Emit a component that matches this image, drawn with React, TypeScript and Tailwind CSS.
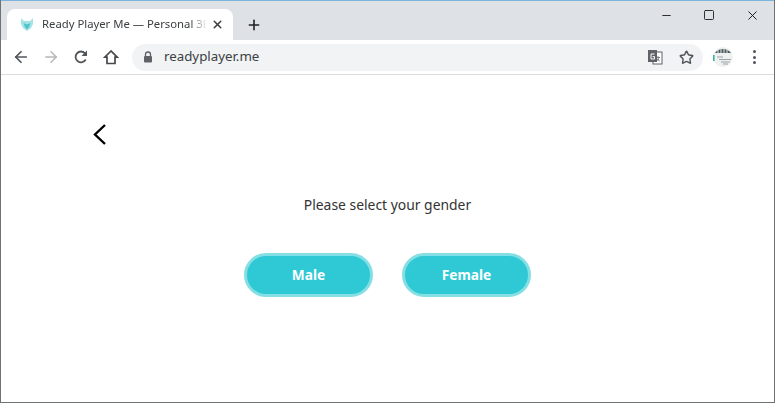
import React from 'react';
import { ArrowLeft, ArrowRight, Star, Plus, X, Minus, Square } from 'lucide-react';

function Favicon() {
  return (
    <svg width="14" height="15" viewBox="0 0 14 15" fill="none" className="shrink-0">
      <path d="M1 1l3 3h6l3-3v6l-2 4-4 3-4-3-2-4z" fill="#a5e4e6" />
      <path d="M3.500 6l3.500 1.500L10.500 6 9 10l-2 2.500L5 10z" fill="#4dc3cb" />
    </svg>
  );
}

function TranslateIcon() {
  return (
    <svg width="16" height="16" viewBox="0 0 16 16" className="shrink-0">
      <rect x="6" y="3" width="9" height="12" fill="#fff" stroke="#5f6368" />
      <rect x="1" y="1" width="9" height="12" fill="#5f6368" />
      <path d="M7.500 5H4v5h3.500V7.600H5.600" fill="none" stroke="#fff" strokeWidth="1" />
      <path d="M11 7v1M9 8.500h4M12 8.500c-.4 2-1.400 3-2.600 3.600M10 9.500c.6 1.200 1.500 2 2.800 2.500" fill="none" stroke="#5f6368" strokeWidth=".8" />
    </svg>
  );
}

function ReloadIcon() {
  return (
    <svg width="16" height="16" viewBox="0 0 16 16" fill="none" className="shrink-0">
      <path d="M12.700 10.500A5.400 5.400 0 1 1 12 4.300" stroke="#50555a" strokeWidth="1.800" />
      <path d="M14 1.500V7H8.500z" fill="#50555a" />
    </svg>
  );
}

function HomeIcon() {
  return (
    <svg width="16" height="16" viewBox="0 0 16 16" fill="none" className="shrink-0">
      <path d="M8 2L1.800 8.200H4v6.300h8V8.200h2.200z" stroke="#47494d" strokeWidth="1.700" strokeLinejoin="miter" />
    </svg>
  );
}

function LockIcon() {
  return (
    <svg width="10" height="12" viewBox="0 0 10 12" fill="none" className="shrink-0">
      <path d="M2.500 5V3.500a2.500 2.500 0 0 1 5 0V5" stroke="#5f6368" strokeWidth="1.300" />
      <rect x="1" y="5" width="8" height="6.500" rx="1" fill="#5f6368" />
    </svg>
  );
}

function Avatar() {
  return (
    <svg width="20" height="20" viewBox="0 0 20 20" className="shrink-0">
      <circle cx="10" cy="10" r="10" fill="#eef1f0" />
      <path d="M2 6a10 10 0 0 1 16 0z" fill="#4c5a60" />
      <path d="M5 2.500v3.500M8 1v5M11 1v5M14 2v4" stroke="#dfe5e5" strokeWidth="1" />
      <path d="M.8 8v6" stroke="#3db2a8" strokeWidth="1.600" />
      <path d="M4 10h6M6 12.500h12M8 15h9M10 17h5" stroke="#9aa3a6" strokeWidth="1" />
    </svg>
  );
}

function MoreDots() {
  return (
    <div className="flex flex-col gap-[2.500px]">
      <div className="h-[3px] w-[3px] rounded-full bg-[#50555a]" />
      <div className="h-[3px] w-[3px] rounded-full bg-[#50555a]" />
      <div className="h-[3px] w-[3px] rounded-full bg-[#50555a]" />
    </div>
  );
}

function ToolButton({ children }: { children: React.ReactNode }) {
  return <div className="flex h-5 w-5 items-center justify-center">{children}</div>;
}

export default function App() {
  return (
    <div className="flex h-[403px] w-[775px] flex-col overflow-hidden border-x border-b border-x-[#6d7275] border-b-[#6d7275] bg-white font-['Noto_Sans',sans-serif]">
      {/* title bar */}
      <div className="border-t border-t-[#7db4dc] bg-[#dee1e6]">
        <div className="flex h-[39px] items-end pl-[6px]">
          <div className="flex h-[31px] w-[226px] items-center rounded-t-lg bg-white pl-[13px] pr-[9px]">
            <Favicon />
            <span className="ml-[8px] w-[165px] overflow-hidden whitespace-nowrap text-[11.300px] text-[#3c4043] [mask-image:linear-gradient(to_right,black_90%,transparent)]">
              Ready Player Me — Personal 3D
            </span>
            <X size={13} strokeWidth={2.800} className="ml-auto text-[#3c4043]" />
          </div>
          <div className="ml-[13px] flex h-[31px] items-center">
            <Plus size={16} strokeWidth={2.400} className="text-[#202124]" />
          </div>
          <div className="ml-auto flex h-full items-start pr-[14px] pt-[8px] text-[#111]">
            <Minus size={13} strokeWidth={1.600} className="mt-[0px]" />
            <Square size={12} strokeWidth={1.700} className="ml-[30px]" />
            <X size={15} strokeWidth={1.500} className="ml-[30px] -mt-[1px]" />
          </div>
        </div>
      </div>

      {/* toolbar */}
      <div className="flex h-[35px] items-center border-b border-b-[#dadce0] bg-white pl-[10px] pr-[11px]">
        <div className="flex items-center gap-[10px]">
          <ToolButton><ArrowLeft size={18} strokeWidth={2.300} className="text-[#50555a]" /></ToolButton>
          <ToolButton><ArrowRight size={18} strokeWidth={2} className="text-[#b4b6b9]" /></ToolButton>
          <ToolButton><ReloadIcon /></ToolButton>
          <ToolButton><HomeIcon /></ToolButton>
        </div>
        <div className="ml-[11px] flex h-[27px] w-[571px] items-center rounded-full bg-[#f1f3f4] pl-[11px] pr-[9px]">
          <LockIcon />
          <span className="ml-[11px] text-[13.300px] text-[#3c4043]">readyplayer.me</span>
          <div className="ml-auto flex items-center gap-[16px]">
            <TranslateIcon />
            <Star size={15} strokeWidth={2.300} className="text-[#50555a]" />
          </div>
        </div>
        <div className="ml-[10px]"><Avatar /></div>
        <div className="ml-[20px]"><MoreDots /></div>
      </div>

      {/* page */}
      <div className="flex flex-1 flex-col">
        <div className="pl-[90px] pt-[47px]">
          <svg width="18" height="24" viewBox="0 0 18 24" fill="none">
            <path d="M14 3L4 12.500 14 22" stroke="#000" strokeWidth="2.400" />
          </svg>
        </div>
        <p className="mt-[49px] text-center text-[13.900px] text-[#333]">Please select your gender</p>
        <div className="mt-[37px] flex justify-center gap-[29px]">
          <button className="h-[44px] w-[129px] rounded-full border-[3px] border-[#84dfe4] bg-[#2fc9d5] text-[13.700px] font-bold text-white">Male</button>
          <button className="h-[44px] w-[129px] rounded-full border-[3px] border-[#84dfe4] bg-[#2fc9d5] text-[13.700px] font-bold text-white">Female</button>
        </div>
      </div>
    </div>
  );
}
